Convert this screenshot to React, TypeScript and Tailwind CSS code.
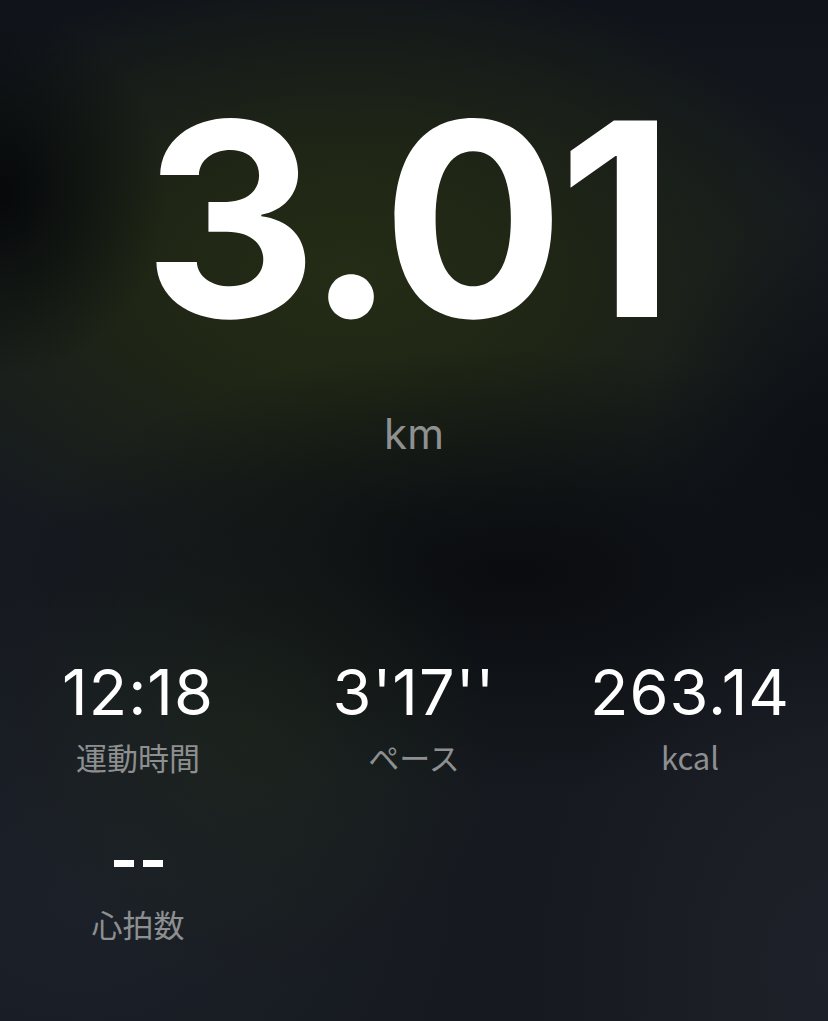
import React from "react";

const latin = { fontFamily: 'Inter, "Noto Sans CJK JP", sans-serif' };
const cjk = { fontFamily: '"Noto Sans CJK JP", Inter, sans-serif' };

function Stat({ value, label }: { value: string; label: string }) {
  return (
    <div className="flex flex-col items-center">
      <div className="text-[63px] leading-[76px] font-normal text-white tracking-[1px]">{value}</div>
      <div className="mt-[7px] text-[31px] leading-[40px] text-[#8d8f91]" style={cjk}>
        {label}
      </div>
    </div>
  );
}

export default function App() {
  return (
    <div className="relative w-[828px] h-[1021px] overflow-hidden bg-[#161a20]" style={latin}>
      <div className="absolute inset-0 bg-[linear-gradient(180deg,#10141a_0%,rgba(16,20,26,0)_25%)]" />
      <div className="absolute inset-0 bg-[radial-gradient(ellipse_62%_30%_at_42%_27%,#242c16_0%,#1f2615_40%,rgba(26,32,22,0)_100%)]" />
      <div className="absolute inset-0 bg-[radial-gradient(ellipse_20%_18%_at_0%_19%,#06080a_0%,rgba(6,8,10,0)_100%)]" />
      <div className="absolute inset-0 bg-[radial-gradient(ellipse_60%_22%_at_62%_56%,#0a0c0f_0%,rgba(10,12,15,0)_100%)]" />
      <div className="absolute inset-0 bg-[radial-gradient(ellipse_22%_25%_at_100%_45%,#0c0f13_0%,rgba(12,15,19,0)_100%)]" />
      <div className="absolute inset-0 bg-[radial-gradient(ellipse_45%_30%_at_10%_88%,#1c2029_0%,rgba(28,32,41,0)_100%)]" />
      <div className="absolute inset-0 bg-[radial-gradient(ellipse_35%_40%_at_100%_95%,#1e2129_0%,rgba(30,33,41,0)_100%)]" />
      <div className="absolute inset-0 bg-[radial-gradient(ellipse_30%_25%_at_30%_72%,#1f2a17_0%,rgba(31,42,23,0)_100%)] opacity-50" />
      <div className="relative flex flex-col items-center">
        <div className="mt-[64px] mr-[16px] text-[270px] leading-[310px] font-bold text-white tracking-[-6px]">3.01</div>
        <div className="mt-[35px] text-[42px] leading-[50px] text-[#8f9091]">km</div>
        <div className="mt-[195px] grid w-full grid-cols-3">
          <Stat value="12:18" label="運動時間" />
          <Stat value="3'17''" label="ペース" />
          <Stat value="263.14" label="kcal" />
        </div>
        <div className="mt-[44px] grid w-full grid-cols-3">
          <div className="flex flex-col items-center">
            <div className="flex h-[76px] items-center gap-[9px] pt-[8px]">
              <span className="block h-[7px] w-[20px] bg-white" />
              <span className="block h-[7px] w-[20px] bg-white" />
            </div>
            <div className="mt-[7px] text-[31px] leading-[40px] text-[#8d8f91]" style={cjk}>
              心拍数
            </div>
          </div>
        </div>
      </div>
    </div>
  );
}
